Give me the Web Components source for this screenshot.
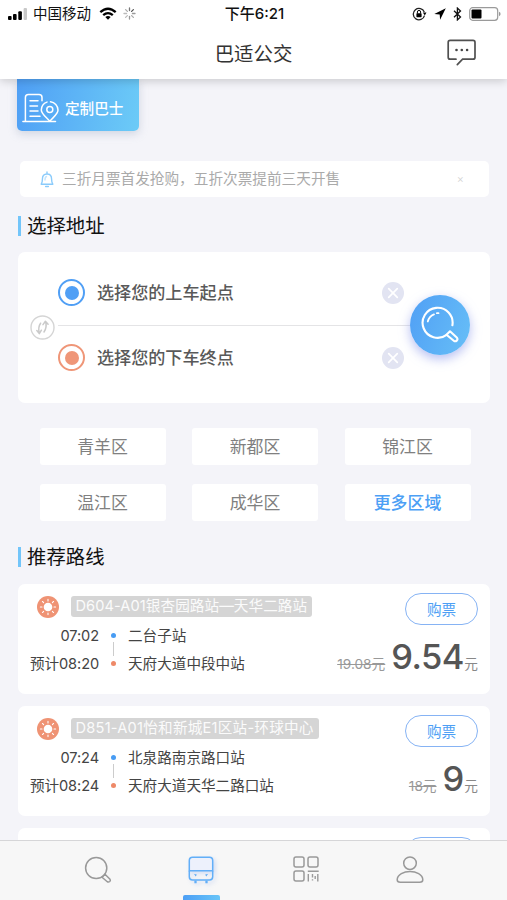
<!DOCTYPE html>
<html lang="zh-CN">
<head>
<meta charset="utf-8">
<meta name="viewport" content="width=device-width">
<title>巴适公交</title>
<style>
html,body{margin:0;height:100%;overflow:hidden}
body{font-family:Inter,"Noto Sans CJK SC",sans-serif;background:#f4f4f9;color:#333}
</style>
</head>
<body>
<bus-app></bus-app>
<script>
const define = (name, css, html) => customElements.define(name, class extends HTMLElement {
  constructor() {
    super();
    this.attachShadow({mode: 'open'});
  }
  connectedCallback() {
    const markup = typeof html === 'function' ? html(this) : html;
    this.shadowRoot.innerHTML = `<style>*{box-sizing:border-box}svg{display:block}${css}</style>${markup}`;
  }
});

const icons = {
  signal: [20, 12, `<rect x="0" y="8" width="3.6" height="4" rx="1"/><rect x="5" y="6" width="3.6" height="6" rx="1"/><rect x="10.300" y="3.200" width="3.600" height="8.800" rx="1"/><rect x="15.600" y="0" width="3.400" height="12" rx="1" fill="#c8c8c8"/>`],
  wifi: [18, 13, `<g fill="none" stroke="#000" stroke-width="2.3"><path d="M1.300 5.200Q9 -1.800 16.700 5.200"/><path d="M4.200 8.200Q9 4 13.800 8.200"/></g><path d="M6.300 10.100Q9 7.900 11.700 10.100L9 12.800Z"/>`],
  spinner: [13, 13, `<g stroke-width="1.300" stroke-linecap="round" stroke="#777"><path d="M6.500 1v2.600"/><path d="M10.400 2.600L8.600 4.400" stroke="#555"/><path d="M12 6.500H9.400" stroke="#999"/><path d="M10.400 10.400L8.600 8.600" stroke="#aaa"/><path d="M6.500 12V9.400" stroke="#999"/><path d="M2.600 10.400L4.400 8.600" stroke="#bbb"/><path d="M1 6.500h2.600" stroke="#bbb"/><path d="M2.600 2.600L4.400 4.400" stroke="#aaa"/></g>`],
  lock: [15, 14, `<path d="M12.300 5A5.700 5.700 0 1 0 12.500 8.600" fill="none" stroke="#222" stroke-width="1.300"/><path d="M10.900 5.600h3.600l-1.700 2.800z"/><rect x="4.400" y="6.300" width="5.200" height="3.900" rx=".6"/><path d="M5.400 6.500V5a1.600 1.600 0 0 1 3.200 0v1.500" fill="none" stroke="#000" stroke-width="1"/>`],
  arrow: [12, 12, `<path d="M11.800.3L.3 6l5.400.4.4 5.300z"/>`],
  bluetooth: [9, 14, `<path d="M1 3.800l6.500 6.200L4.400 12.900V1.100L7.500 4 1 10.200" fill="none" stroke="#111" stroke-width="1.300"/>`],
  battery: [32, 14, `<rect x=".7" y=".7" width="28" height="12.600" rx="3" fill="none" stroke="#9a9a9a" stroke-width="1.200"/><rect x="2.500" y="2.500" width="10" height="9" rx="1"/><path d="M30 4.800v4.400q1.600-.6 1.600-2.200T30 4.800z" fill="#999"/>`],
  chat: [30, 28, `<path d="M9 20.200H3.200A2 2 0 0 1 1.200 18.200V3.400A2 2 0 0 1 3.200 1.400H26A2 2 0 0 1 28 3.400V18.200A2 2 0 0 1 26 20.200H15.600L10.300 25.600" fill="none" stroke="#505050" stroke-width="1.700" stroke-linecap="round"/><g fill="#444"><circle cx="9.500" cy="11" r="1.300"/><circle cx="14.800" cy="11" r="1.300"/><circle cx="20.100" cy="11" r="1.300"/></g>`],
  building: [37, 30, `<g fill="none" stroke="#fff" stroke-width="1.500" stroke-linecap="round" stroke-linejoin="round"><path d="M.9 28.500H33.500M3.400 28.500V4.500Q3.400 1.500 6.400 1.500H17Q20 1.500 20 4.500V7.800"/><path d="M8 7.700h8M8 12.900h7.500M8 18h8M8 23.200h10"/><path d="M27.800 28.200C23.500 23.500 19.300 20.700 19.300 17A8.500 8.500 0 0 1 25 9.100M28.500 8.800A8.400 8.400 0 0 1 36 17C36 20.900 32 23.500 27.800 28.200"/><circle cx="27.800" cy="16.600" r="3"/></g>`],
  bell: [14, 17, `<g fill="none" stroke="#8acbfb" stroke-width="1.400" stroke-linecap="round" stroke-linejoin="round"><path d="M1.200 13.200h11.600q-1.200-1.700-1.200-5Q11.600 3 7 3T2.400 8.200q0 3.300-1.200 5zM7 1v2M5.600 15.500h2.800"/><path d="M5 9q0-3 1.500-3.500" stroke="#c5e5fd"/></g>`],
  swap: [25, 25, `<circle cx="12.500" cy="12.500" r="11.500" fill="#fff" stroke="#d5d5d5" stroke-width="1.400"/><g fill="none" stroke="#cacaca" stroke-width="1.500" stroke-linejoin="round" stroke-linecap="round"><path d="M10.600 8.200Q7.800 12 9.200 18.200M6.800 15.600l2.500 3 2.100-3.400M14 17Q17.200 12.500 15.600 6.600M13 9.600l2.400-3.300 2.700 3"/></g>`],
  clear: [22, 22, `<circle cx="11" cy="11" r="11" fill="#e2e4f2"/><path d="M6.700 6.700l8.600 8.600M15.300 6.700l-8.600 8.600" stroke="#fff" stroke-width="1.700" stroke-linecap="round"/>`],
  find: [38, 38, `<g fill="none" stroke="#fff" stroke-width="2.100" stroke-linecap="round" stroke-linejoin="round"><path d="M25.600 28.800A15 15 0 1 1 31.400 19.300"/><path d="M6.800 15.500A10.500 10.500 0 0 1 13 8.400M15.900 7.200h1.600" stroke-width="1.800"/><path d="M25.500 28.700L29 25.300L36 31.800Q37 33.300 35.800 34.600Q34.200 35.900 32.800 34.700Z"/></g>`],
  sun: [22, 22, `<circle cx="11" cy="11" r="11" fill="#ef9374"/><circle cx="11" cy="11" r="4.300" fill="#fff"/><g stroke="#fff" stroke-width="1.100" stroke-linecap="round" stroke-dasharray="1.600 50"><path d="M11 5V2M11 17V20M5 11H2M17 11H20M6.600 6.600L4 4M15.400 15.400L18 18M15.400 6.600L18 4M6.600 15.400L4 18"/></g>`],
  tabsearch: [28, 28, `<g fill="none" stroke="#999" stroke-width="1.500" stroke-linejoin="round"><circle cx="12.200" cy="12" r="10.600"/><path d="M18 21.300L21 18.300L26 23.200Q26.800 24.500 25.800 25.500Q24.600 26.400 23.300 25.800Z"/></g>`],
  bus: [27, 29, `<g fill="none" stroke="#62aff8" stroke-width="1.500"><path d="M1.300 14.700V4.500Q1.300 1.200 4.500 1.200H21.500Q24.700 1.200 24.700 4.500V14.700Z" fill="#edf1fc"/><path d="M1.300 14.700V20.800Q1.300 24 4.500 24H21.500Q24.700 24 24.700 20.800V14.700"/><path d="M7.500 24.500v2.800M18.500 24.500v2.800" stroke-width="2.300"/></g><path d="M6 18l2.800.6-1 2zM20 18l-2.800.6 1 2z" fill="#5ba9f5"/>`],
  qr: [27, 27, `<g fill="none" stroke="#9a9a9a" stroke-width="1.500"><rect x="1" y="1" width="10" height="10" rx="2"/><rect x="15" y="1" width="10" height="10" rx="2"/><rect x="1" y="15" width="10" height="10" rx="2"/><path d="M14.800 15.200H25.700M15.300 18v7.500M19.500 18v3.500M19.500 23.200v1.300M24.800 18v7.500M22.200 20v3" stroke-width="1.400"/></g>`],
  user: [28, 28, `<g fill="none" stroke="#999" stroke-width="1.500"><circle cx="14" cy="7.200" r="6.300"/><path d="M4.200 26.300Q1.200 26.300 1.200 23.800C1.200 18.500 8 15.500 14 15.500S26.800 18.500 26.800 23.800Q26.800 26.300 23.800 26.300Z"/></g>`]
};

define('ui-icon', ':host{display:block;flex:none}', el => {
  const [w, h, body] = icons[el.getAttribute('name')];
  return `<svg width="${w}" height="${h}" viewBox="0 0 ${w} ${h}" aria-hidden="true">${body}</svg>`;
});

define('status-bar', `
:host{display:grid;grid-template-columns:1fr auto 1fr;align-items:center;height:27px;padding:0 6px 0 8px;color:#111;font-size:14.500px;line-height:20px}
.l,.r{display:flex;align-items:center}
.l{gap:5px}.l ui-icon:nth-of-type(2){margin-left:3px}.l ui-icon:nth-of-type(3){margin-left:1px}
.r{justify-content:flex-end;gap:7px}
.t{font-weight:500;font-size:15px}`,
`<div class="l"><ui-icon name="signal"></ui-icon><span>中国移动</span><ui-icon name="wifi"></ui-icon><ui-icon name="spinner"></ui-icon></div>
<span class="t">下午6:21</span>
<div class="r"><ui-icon name="lock"></ui-icon><ui-icon name="arrow"></ui-icon><ui-icon name="bluetooth"></ui-icon><ui-icon name="battery"></ui-icon></div>`);

define('nav-header', `
:host{display:grid;grid-template-columns:1fr auto 1fr;align-items:center;height:52px;padding:0 30px 0 30px;font-size:19.400px;line-height:28px;color:#333}
.title{grid-column:2;padding-top:1px}
ui-icon{justify-self:end}`,
`<span class="title"><slot></slot></span><ui-icon name="chat"></ui-icon>`);

define('promo-button', `
:host{display:flex;align-items:center;gap:6px;width:122px;height:52px;margin-left:17px;padding:5px 0 0 5px;border-radius:0 0 5px 5px;background:linear-gradient(100deg,#4f9ff5,#6ccbf7);box-shadow:0 3px 8px #9aa8c066;color:#fff;font-weight:500;font-size:14.600px;line-height:20px}
span{padding-top:2px}`,
`<ui-icon name="building"></ui-icon><span><slot></slot></span>`);

define('notice-bar', `
:host{display:flex;align-items:center;height:36px;margin:30px 18px 0 20px;padding:0 25px 0 20px;background:#fff;border-radius:5px;color:#aaa;font-size:14.650px;line-height:20px}
span{flex:1;margin-left:8px}
i{flex:none;font:300 11px/12px Inter,sans-serif;color:#d2d2d2}`,
`<ui-icon name="bell"></ui-icon><span><slot></slot></span><i>×</i>`);

define('section-title', `
:host{display:flex;align-items:center;height:20px;margin-left:18px;padding:1px 0 0 6px;border-left:3px solid #72c5fa;color:#111;font-size:19.400px;line-height:20px}`,
`<slot></slot>`);

define('address-field', `
:host{display:flex;align-items:center;height:64px;color:#595959;font-size:17.100px;line-height:24px;font-weight:500}
.dot{flex:none;width:27px;height:27px;border:2px solid var(--c);border-radius:50%;padding:4.500px;background:var(--c) content-box}
span{flex:1;margin-left:12px;padding-top:1px}`,
`<div class="dot"></div><span><slot></slot></span><ui-icon name="clear"></ui-icon>`);

define('address-picker', `
:host{display:grid;grid-template-columns:25px 346px 60px;column-gap:3px;align-items:center;height:151px;margin:16px 17px 0 18px;padding:9px 0 14px 12px;background:#fff;border-radius:7px}
.swap{margin-top:5px}
.line{height:1px;background:#e4e4e6;margin-right:-10px}
.go{display:flex;align-items:center;justify-content:center;width:60px;height:60px;margin-left:3px;border-radius:50%;background:linear-gradient(110deg,#509ff5,#67bff7);box-shadow:0 4px 11px #8794e999;position:relative}`,
`<ui-icon class="swap" name="swap"></ui-icon>
<div><slot name="from"></slot><div class="line"></div><slot name="to"></slot></div>
<div class="go"><ui-icon name="find"></ui-icon></div>`);

define('district-chip', `
:host{display:flex;align-items:center;justify-content:center;height:37px;padding-top:2px;background:#fff;border-radius:3px;color:#808080;font-size:16.900px;line-height:24px}
:host([more]){color:#4d9ff5;font-weight:500}`,
`<slot></slot>`);

define('district-grid', `
:host{display:grid;grid-template-columns:repeat(3,126px);gap:19px 26.500px;margin:25px 0 26px 39.500px}`,
`<slot></slot>`);

define('route-card', `
:host{display:flex;justify-content:space-between;height:109.500px;margin:0 17px 12.500px 18px;padding:9px 12px 0 12px;background:#fff;border-radius:7px;font-size:14.600px;line-height:20px}
.head{display:flex;align-items:center;height:27px;padding-left:6.500px}
.tag{height:21px;margin-left:12px;padding:0 5px;border-radius:3px;background:#d5d5d5;color:#fbfbfb;white-space:nowrap;letter-spacing:var(--ls,0)}
.stops{display:grid;grid-template-columns:69px 29px auto;grid-template-rows:28px 28px;align-items:center;color:#444;margin-top:1px}
.time{text-align:right;white-space:nowrap;letter-spacing:-.1px}
.rail{grid-area:1/2/3/3;display:flex;flex-direction:column;align-items:center;gap:4.500px}
.rail b{width:5px;height:5px;border-radius:50%;background:#489cf3}
.rail b:last-child{background:#ee8968}
.rail i{width:1px;height:14px;background:#ccc}
.name{grid-column:3;white-space:nowrap}
.time,.name{padding-top:1px}
.side{display:flex;flex-direction:column;align-items:flex-end}
.buy{display:flex;align-items:center;justify-content:center;width:73px;height:32px;padding-top:1px;border:1.500px solid #86b3f4;border-radius:16px;color:#4d9ff5}
.price{display:flex;align-items:baseline;height:44px;line-height:44px;margin-top:10px;color:#888;font-size:13.700px}
.price s{margin-right:6px;color:#999}
.price strong{font-weight:500;font-size:34.500px;letter-spacing:-.6px;margin-right:.6px;color:#555}`,
el => {
  const a = n => el.getAttribute(n);
  return `<div class="main"><div class="head"><ui-icon name="sun"></ui-icon><div class="tag"><slot></slot></div></div>
<div class="stops"><span class="time">${a('start')}</span><span class="rail"><b></b><i></i><b></b></span><span class="name">${a('from')}</span><span class="time">预计${a('end')}</span><span class="name">${a('to')}</span></div></div>
<div class="side"><div class="buy">购票</div><div class="price"><s>${a('was')}元</s><strong>${a('price')}</strong>元</div></div>`;
});

define('next-card', `
:host{display:flex;justify-content:flex-end;height:109px;margin:0 17px 0 18px;padding:9px 12px 0;background:#fff;border-radius:7px}
div{width:73px;height:32px;border:1.500px solid #86b3f4;border-radius:16px}`, `<div></div>`);

define('tab-bar', `
:host{display:grid;grid-template-columns:repeat(4,104.300px);justify-content:center;height:60px;padding-left:1px;background:#f7f7f7;border-top:1px solid #d6d6d8}
div{display:flex;flex-direction:column;align-items:center;justify-content:space-between;padding-top:15px}
.on ui-icon{filter:drop-shadow(2px 2px 2px #86a8ec55)}
.on::after{content:"";width:37px;height:5px;border-radius:2px 2px 0 0;background:linear-gradient(90deg,#4d9ff5,#68c5f8)}`,
`<div><ui-icon name="tabsearch"></ui-icon></div><div class="on"><ui-icon name="bus"></ui-icon></div><div><ui-icon name="qr"></ui-icon></div><div><ui-icon name="user"></ui-icon></div>`);

define('bus-app', `
:host{display:grid;grid-template-rows:79px minmax(0,1fr) 60px;height:100vh;background:#f4f4f9}
header{background:#fff;box-shadow:0 2px 9px #0000002e;z-index:1}
main{overflow:hidden}
.st{margin-top:18.500px}
.routes{margin-top:17.500px}`,
`<header><status-bar></status-bar><nav-header>巴适公交</nav-header></header>
<main>
<promo-button>定制巴士</promo-button>
<notice-bar>三折月票首发抢购，五折次票提前三天开售</notice-bar>
<section-title class="st">选择地址</section-title>
<address-picker><address-field slot="from" style="--c:#509ff5">选择您的上车起点</address-field><address-field slot="to" style="--c:#ef9678">选择您的下车终点</address-field></address-picker>
<district-grid><district-chip>青羊区</district-chip><district-chip>新都区</district-chip><district-chip>锦江区</district-chip><district-chip>温江区</district-chip><district-chip>成华区</district-chip><district-chip more>更多区域</district-chip></district-grid>
<section-title>推荐路线</section-title>
<div class="routes">
<route-card style="--ls:.08px" start="07:02" end="08:20" from="二台子站" to="天府大道中段中站" was="19.08" price="9.54">D604-A01银杏园路站—天华二路站</route-card>
<route-card style="--ls:.24px" start="07:24" end="08:24" from="北泉路南京路口站" to="天府大道天华二路口站" was="18" price="9">D851-A01怡和新城E1区站-环球中心</route-card>
<next-card></next-card>
</div>
</main>
<tab-bar></tab-bar>`);
</script>
</body>
</html>
